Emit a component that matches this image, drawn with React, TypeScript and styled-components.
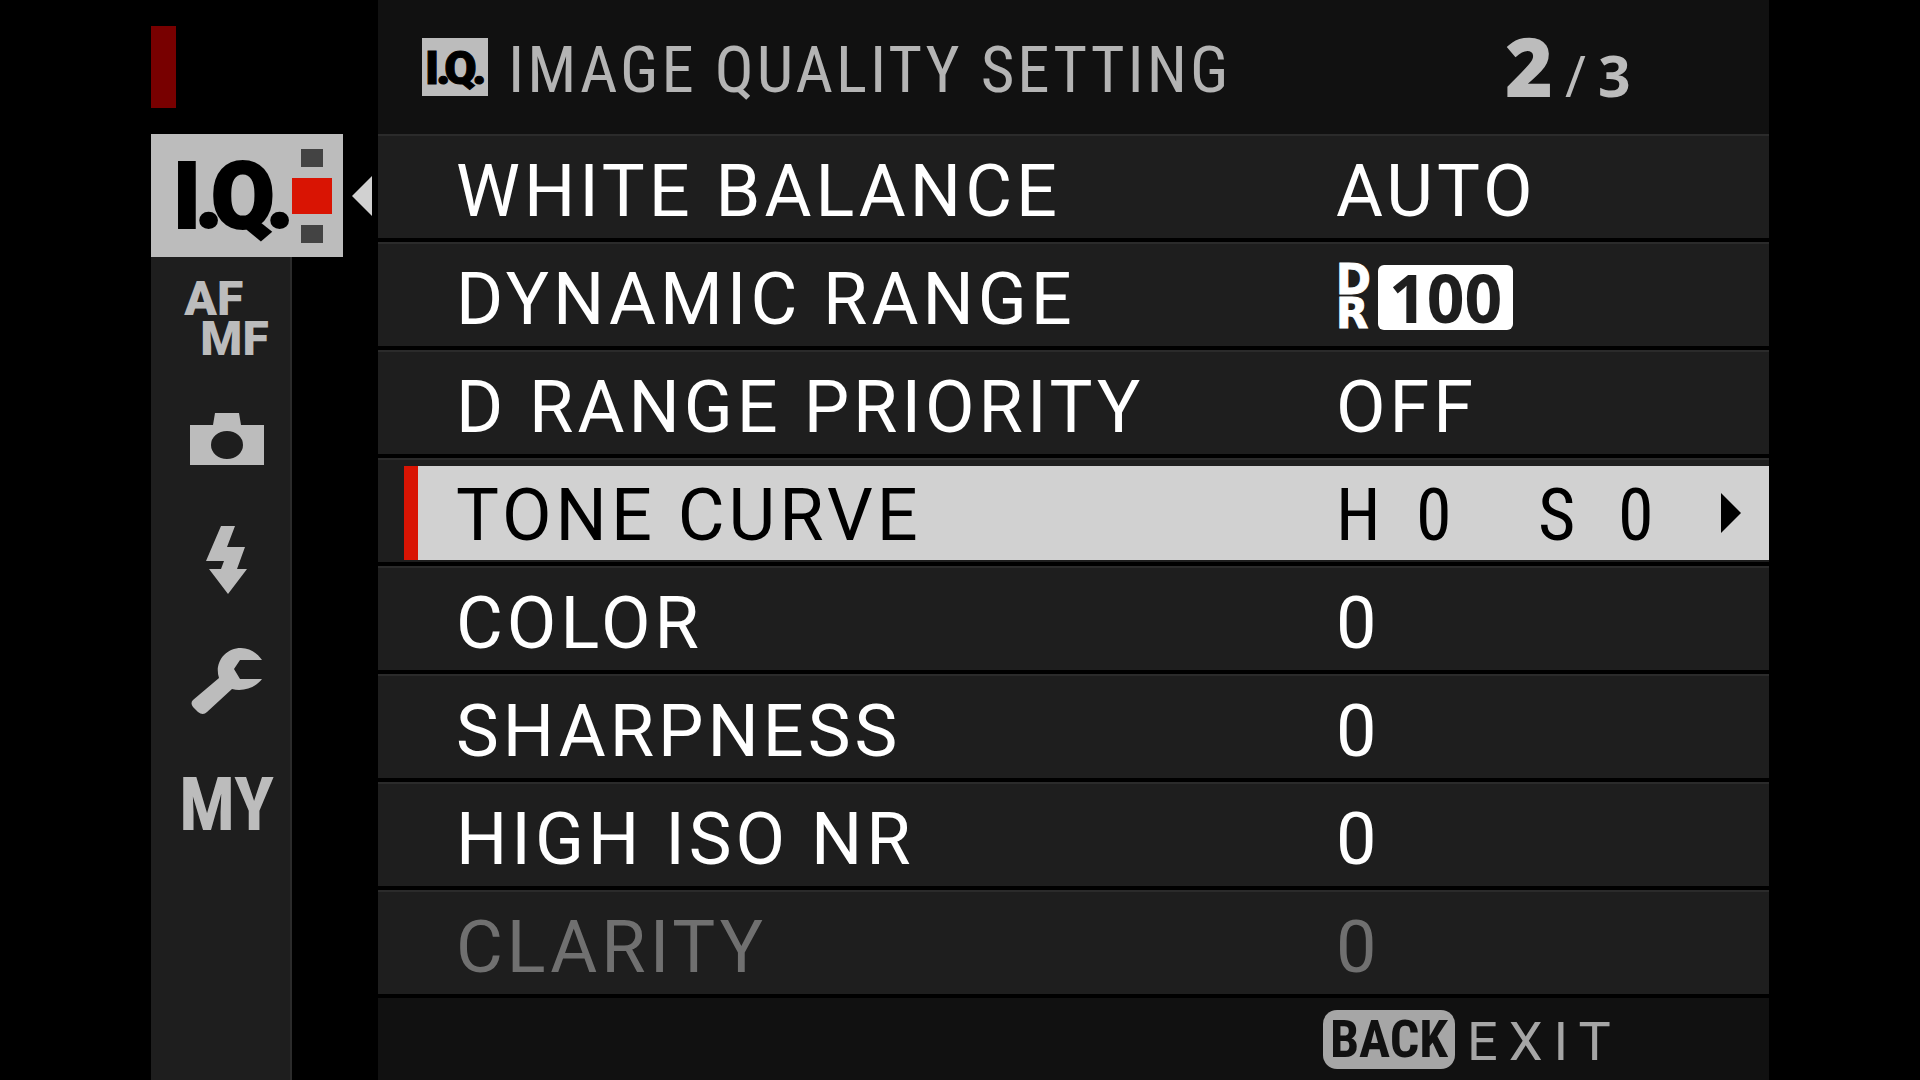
import React from "react";
import styled, { createGlobalStyle, css } from "styled-components";

const color = {
  black: "#000000",
  bar: "#111111",
  panel: "#1e1e1e",
  edge: "#2b2b2b",
  icon: "#bcbcbc",
  title: "#b4b4b4",
  muted: "#a6a6a6",
  disabled: "#707070",
  highlight: "#d1d1d1",
  red: "#d91403",
  darkRed: "#780000",
};

const font = {
  text: 'Roboto, "Liberation Sans", sans-serif',
  narrow: '"Roboto Condensed", "Liberation Sans Narrow", "Liberation Sans", sans-serif',
  bold: '"Open Sans", "Noto Sans", sans-serif',
};

const GlobalStyle = createGlobalStyle`
  *, *::before, *::after { box-sizing: border-box; }
  body { margin: 0; background: ${color.black}; }
  h1, ul, p { margin: 0; padding: 0; }
  ul { list-style: none; }
  button {
    border: 0;
    padding: 0;
    background: none;
    color: inherit;
    font: inherit;
    letter-spacing: inherit;
    text-align: left;
    cursor: pointer;
  }
`;

const Screen = styled.div`
  display: grid;
  grid-template-columns: 227px minmax(0, 1fr);
  min-height: 100vh;
  padding: 0 151px;
  background: ${color.black};
  font-family: ${font.text};
`;

const Sidebar = styled.nav`
  display: flex;
  flex-direction: column;
  align-items: flex-start;
`;

const SidebarTop = styled.div`
  height: 134px;
  padding-top: 26px;
`;

const RecordMark = styled.div`
  width: 25px;
  height: 82px;
  background: ${color.darkRed};
`;

const ActiveRow = styled.div`
  display: flex;
  align-items: center;
  gap: 9px;
`;

const ActiveTab = styled.button`
  display: flex;
  align-items: center;
  justify-content: space-between;
  width: 192px;
  height: 123px;
  padding: 0 11px 0 26px;
  background: ${color.icon};
`;

const IqLogo = styled.svg`
  display: block;
  overflow: visible;
  font-family: ${font.text};
  font-size: 92px;
  font-weight: 900;
  stroke: ${color.black};
  stroke-width: 2px;
`;

const PageDots = styled.span`
  display: flex;
  flex-direction: column;
  align-items: center;
  gap: 11px;
`;

const PageDot = styled.span<{ $current?: boolean }>`
  width: ${(p) => (p.$current ? 40 : 22)}px;
  height: ${(p) => (p.$current ? 36 : 18)}px;
  background: ${(p) => (p.$current ? color.red : "#434343")};
`;

const TabList = styled.ul`
  flex: 1;
  width: 141px;
  background: ${color.panel};
  border-right: 2px solid ${color.edge};
`;

const Tab = styled.button`
  display: flex;
  align-items: center;
  justify-content: center;
  width: 100%;
  height: 121px;
  padding-left: 12px;
  color: ${color.icon};
`;

const FocusMark = styled.span`
  display: grid;
  padding-top: 2px;
  font-size: 48px;
  font-weight: 900;
  line-height: 40px;

  span:last-child {
    padding-left: 16px;
  }
`;

const MyMark = styled.span`
  padding-top: 6px;
  font-family: ${font.narrow};
  font-size: 74px;
  font-weight: 700;
  line-height: 1;
`;

const Panel = styled.main`
  display: flex;
  flex-direction: column;
  background: ${color.bar};
`;

const Header = styled.header`
  display: grid;
  grid-template-columns: minmax(0, 1fr) 264px;
  align-items: center;
  height: 134px;
  padding-left: 44px;
`;

const Heading = styled.div`
  display: flex;
  align-items: center;
  gap: 20px;
`;

const IqBadge = styled.span`
  display: flex;
  align-items: center;
  justify-content: center;
  width: 66px;
  height: 58px;
  background: ${color.icon};
`;

const Title = styled.h1`
  padding-top: 6px;
  font-family: ${font.narrow};
  font-size: 65px;
  font-weight: 400;
  line-height: 72px;
  letter-spacing: 3px;
  white-space: nowrap;
  color: ${color.title};
`;

const Pager = styled.p`
  display: flex;
  align-items: baseline;
  gap: 12px;
  padding-bottom: 4px;
  font-family: ${font.bold};
  font-size: 57px;
  font-weight: 700;
  line-height: 1;
  color: ${color.icon};

  strong {
    font-size: 82px;
  }

  span {
    font-weight: 400;
  }
`;

const Item = styled.li`
  height: 108px;
  padding: 6px 0 2px 26px;
  background: ${color.panel};
  border-top: 2px solid ${color.edge};
  border-bottom: 4px solid ${color.black};
`;

const ItemButton = styled.button<{ $selected?: boolean }>`
  display: grid;
  grid-template-columns: minmax(0, 1fr) 433px;
  align-items: center;
  width: 100%;
  height: 94px;
  padding-left: 38px;
  border-left: 14px solid transparent;
  font-size: 72px;
  line-height: 86px;
  letter-spacing: 4px;
  white-space: nowrap;
  color: #ffffff;

  ${(p) =>
    p.$selected &&
    css`
      border-left-color: ${color.red};
      background: ${color.highlight};
      color: ${color.black};
    `}

  &:disabled {
    color: ${color.disabled};
    cursor: default;
  }
`;

const ItemText = styled.span`
  padding-top: 6px;
`;

const ToneValue = styled.span`
  display: flex;
  align-items: center;
  justify-content: space-between;
  padding-right: 28px;
`;

const ToneLevels = styled.span`
  display: grid;
  grid-template-columns: 80px 122px 80px 40px;
  padding-top: 6px;
  font-family: ${font.narrow};
  letter-spacing: 0;
`;

const RangeBadge = styled.span`
  display: flex;
  align-items: center;
  letter-spacing: 0;
`;

const RangeLetters = styled.span`
  display: grid;
  width: 42px;
  font-family: "DejaVu Sans", sans-serif;
  font-size: 42px;
  font-weight: 700;
  line-height: 34px;
  -webkit-text-stroke: 1px currentColor;
`;

const RangeNumber = styled.span`
  padding: 0 11px;
  border-radius: 6px;
  background: #ffffff;
  color: ${color.panel};
  font-family: ${font.bold};
  font-size: 66px;
  font-weight: 700;
  line-height: 65px;
`;

const Footer = styled.footer`
  display: grid;
  grid-template-columns: minmax(0, 1fr) 446px;
  flex: 1;
  align-items: center;
  min-height: 82px;
`;

const BackButton = styled.button`
  grid-column: 2;
  display: flex;
  align-items: center;
  gap: 12px;
  color: ${color.muted};
`;

const KeyCap = styled.span`
  width: 132px;
  border-radius: 14px;
  background: ${color.muted};
  color: ${color.bar};
  font-family: ${font.narrow};
  font-size: 52px;
  font-weight: 700;
  line-height: 59px;
  text-align: center;
`;

const ExitText = styled.span`
  padding-top: 6px;
  font-size: 54px;
  line-height: 60px;
  letter-spacing: 11px;
`;

const IqMark = ({ width, height }: { width: number; height: number }) => (
  <IqLogo width={width} height={height} viewBox="0 0 110 68" role="img" aria-label="I.Q.">
    <text x="-4 18 34 89" y="66">
      I.Q.
    </text>
  </IqLogo>
);

const CameraIcon = () => (
  <svg width="74" height="52" viewBox="0 0 74 52" fill="currentColor" aria-hidden="true">
    <path
      fillRule="evenodd"
      d="M0 12H23L25 0H49L51 12H74V52H0ZM37 18A16 14 0 1 0 37 46A16 14 0 1 0 37 18Z"
    />
  </svg>
);

const FlashIcon = () => (
  <svg width="42" height="68" viewBox="0 0 42 68" fill="currentColor" aria-hidden="true">
    <path d="M15 0H29L21 21H39L31 43H41L22 68L3 43H15L18 35H0Z" />
  </svg>
);

const WrenchIcon = () => (
  <svg width="72" height="66" viewBox="0 0 72 66" fill="currentColor" aria-hidden="true">
    <path d="M71 12H49L43 21L49 31H71C65 39 53 44 41 41L16 64Q12 68 7 64L2 59Q-1 55 2 52L28 30C23 15 34 0 50 0C59 0 66 5 71 12Z" />
  </svg>
);

const TabArrow = () => (
  <svg width="20" height="40" viewBox="0 0 20 40" fill={color.highlight} aria-hidden="true">
    <path d="M20 0V40L0 20Z" />
  </svg>
);

const MoreArrow = () => (
  <svg width="20" height="40" viewBox="0 0 20 40" fill={color.black} aria-hidden="true">
    <path d="M0 0L20 20L0 40Z" />
  </svg>
);

const tabs = [
  {
    name: "Focus",
    mark: (
      <FocusMark>
        <span>AF</span>
        <span>MF</span>
      </FocusMark>
    ),
  },
  { name: "Shooting", mark: <CameraIcon /> },
  { name: "Flash", mark: <FlashIcon /> },
  { name: "Set up", mark: <WrenchIcon /> },
  { name: "My menu", mark: <MyMark>MY</MyMark> },
];

interface MenuItem {
  label: string;
  value: React.ReactNode;
  selected?: boolean;
  disabled?: boolean;
}

const items: MenuItem[] = [
  { label: "WHITE BALANCE", value: <ItemText>AUTO</ItemText> },
  {
    label: "DYNAMIC RANGE",
    value: (
      <RangeBadge>
        <RangeLetters>
          <span>D</span>
          <span>R</span>
        </RangeLetters>
        <RangeNumber>100</RangeNumber>
      </RangeBadge>
    ),
  },
  { label: "D RANGE PRIORITY", value: <ItemText>OFF</ItemText> },
  {
    label: "TONE CURVE",
    selected: true,
    value: (
      <ToneValue>
        <ToneLevels>
          <span>H</span>
          <span>0</span>
          <span>S</span>
          <span>0</span>
        </ToneLevels>
        <MoreArrow />
      </ToneValue>
    ),
  },
  { label: "COLOR", value: <ItemText>0</ItemText> },
  { label: "SHARPNESS", value: <ItemText>0</ItemText> },
  { label: "HIGH ISO NR", value: <ItemText>0</ItemText> },
  { label: "CLARITY", value: <ItemText>0</ItemText>, disabled: true },
];

export default function App() {
  return (
    <>
      <GlobalStyle />
      <Screen>
        <Sidebar aria-label="Menu tabs">
          <SidebarTop>
            <RecordMark />
          </SidebarTop>
          <ActiveRow>
            <ActiveTab type="button" aria-current="page">
              <IqMark width={110} height={68} />
              <PageDots>
                <PageDot />
                <PageDot $current />
                <PageDot />
              </PageDots>
            </ActiveTab>
            <TabArrow />
          </ActiveRow>
          <TabList>
            {tabs.map((tab) => (
              <li key={tab.name}>
                <Tab type="button" aria-label={tab.name}>
                  {tab.mark}
                </Tab>
              </li>
            ))}
          </TabList>
        </Sidebar>
        <Panel>
          <Header>
            <Heading>
              <IqBadge>
                <IqMark width={56} height={35} />
              </IqBadge>
              <Title>IMAGE QUALITY SETTING</Title>
            </Heading>
            <Pager>
              <strong>2</strong>
              <span>/</span>3
            </Pager>
          </Header>
          <ul>
            {items.map((item) => (
              <Item key={item.label}>
                <ItemButton type="button" $selected={item.selected} disabled={item.disabled}>
                  <ItemText>{item.label}</ItemText>
                  {item.value}
                </ItemButton>
              </Item>
            ))}
          </ul>
          <Footer>
            <BackButton type="button">
              <KeyCap>BACK</KeyCap>
              <ExitText>EXIT</ExitText>
            </BackButton>
          </Footer>
        </Panel>
      </Screen>
    </>
  );
}
